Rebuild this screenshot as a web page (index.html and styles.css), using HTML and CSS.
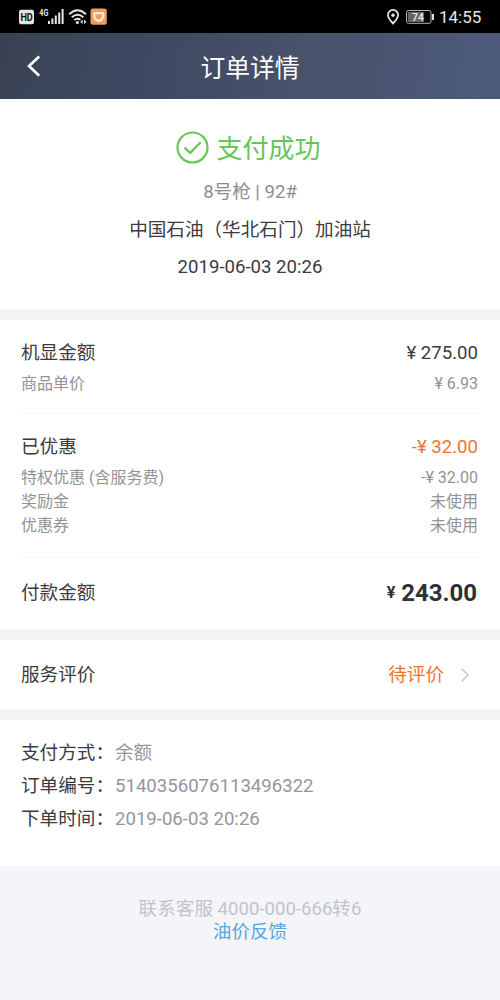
FILE: index.html
```html
<!DOCTYPE html>
<html lang="zh-CN">
<head>
<meta charset="utf-8">
<title>订单详情</title>
<link rel="stylesheet" href="styles.css">
</head>
<body>
<div class="status">
  <svg class="status-left" width="110" height="33" viewBox="0 0 110 33">
    <rect x="19" y="9.700" width="15" height="14.600" rx="2" fill="#e4e4e4"/>
    <text class="hd" x="20.400" y="21" textLength="12.400" lengthAdjust="spacingAndGlyphs">HD</text>
    <text class="net" x="39.300" y="15.600" textLength="9" lengthAdjust="spacingAndGlyphs">4G</text>
    <path d="M49 21v3M52.4 18.6V24M55.8 15.6V24M59.2 12.5V24M62.6 9V24" stroke="#e8e8e8" stroke-width="2"/>
    <g fill="none" stroke="#e4e4e4" stroke-width="1.900">
      <path d="M69.200 14.300q8.300-8 16.800 0"/>
      <path d="M71.800 17.300q5.800-5.200 11.600 0"/>
      <path d="M74.200 20q3.300-2.600 6.200-.2"/>
    </g>
    <circle cx="77.400" cy="22.500" r="1.600" fill="#e4e4e4"/>
    <path d="M82.600 19.500v4.400l-2.400-2.200zM84 19.500v4.400l2.400-2.200z" fill="#e4e4e4"/>
    <rect x="90.500" y="8.500" width="16.300" height="16.300" rx="2.500" fill="#f39a62"/>
    <path d="M93 13.600q0-1.600 1.600-1.600h8.200q1.600 0 1.600 1.600c0 4.600-1.800 8.400-5.700 8.400S93 18.200 93 13.600z" fill="#fbe9dc"/>
    <path d="M95.300 14.200h6.800c0 3-1 5.300-3.400 5.300s-3.400-2.300-3.400-5.300z" fill="#f39a62"/>
  </svg>
  <div class="status-right">
    <svg width="48" height="33" viewBox="0 0 48 33">
      <path d="M7 9.900a5.100 5.100 0 0 1 5.100 5.100c0 3.200-3.100 6-5.100 8.600c-2-2.600-5.100-5.400-5.100-8.600A5.100 5.100 0 0 1 7 9.900z" fill="none" stroke="#e8e8e8" stroke-width="1.700"/>
      <circle cx="7" cy="15.200" r="1.700" fill="#e8e8e8"/>
      <rect x="20.500" y="10.500" width="24.500" height="12.800" rx="2" fill="#000" stroke="#b5b5b5"/>
      <rect x="21.800" y="11.800" width="16" height="10.200" fill="#666"/>
      <rect x="46" y="14" width="2" height="6" fill="#ddd"/>
      <text class="level" x="26" y="21">74</text>
    </svg>
    <span class="clock">14:55</span>
  </div>
</div>
<header class="nav">
  <svg class="back" width="16" height="24" viewBox="0 0 16 24"><path d="M13.200 2.500L3 12l10.200 9.800" fill="none" stroke="#fff" stroke-width="2.600"/></svg>
  <h1 class="title">订单详情</h1>
</header>
<section class="card result">
  <div class="success">
    <svg width="33" height="33" viewBox="0 0 33 33" fill="none" stroke="#66c657"><circle cx="16.500" cy="16.500" r="15" stroke-width="2.200"/><path d="M8.500 16.700l5.700 5.200L24.700 11.300" stroke-width="2.300"/></svg>
    <span class="success-text">支付成功</span>
  </div>
  <div class="pump">8号枪 | 92#</div>
  <div class="station">中国石油（华北石门）加油站</div>
  <div class="date">2019-06-03 20:26</div>
</section>
<section class="card amounts">
  <div class="group">
    <div class="row main"><span>机显金额</span><span>¥ 275.00</span></div>
    <div class="row sub"><span>商品单价</span><span>¥ 6.93</span></div>
  </div>
  <div class="group discount">
    <div class="row main"><span>已优惠</span><span class="orange">-¥ 32.00</span></div>
    <div class="row sub"><span>特权优惠 (含服务费)</span><span>-¥ 32.00</span></div>
    <div class="row sub"><span>奖励金</span><span>未使用</span></div>
    <div class="row sub"><span>优惠券</span><span>未使用</span></div>
  </div>
  <div class="row total"><span>付款金额</span><span class="sum"><span class="yen">¥</span> 243.00</span></div>
</section>
<section class="card review">
  <span>服务评价</span>
  <span class="pending">待评价
    <svg width="10" height="16" viewBox="0 0 10 16"><path d="M1.500 1.500L8 8l-6.500 6.500" fill="none" stroke="#c8c8cc" stroke-width="1.500"/></svg>
  </span>
</section>
<section class="card info">
  <div class="line"><span>支付方式：</span><span class="value">余额</span></div>
  <div class="line"><span>订单编号：</span><span class="value">5140356076113496322</span></div>
  <div class="line"><span>下单时间：</span><span class="value">2019-06-03 20:26</span></div>
</section>
<footer class="footer">
  <div>联系客服 4000-000-666转6</div>
  <a class="feedback">油价反馈</a>
</footer>
</body>
</html>
```
FILE: styles.css
```css
* { box-sizing: border-box; }
body {
  margin: 0;
  width: 500px;
  height: 1000px;
  overflow: hidden;
  display: flex;
  flex-direction: column;
  background: #f4f4f5;
  color: #3b3b40;
  font: 18.6px/24px Roboto, "Noto Sans CJK SC", sans-serif;
}
svg { display: block; flex: none; }
.status {
  height: 33px;
  flex: none;
  display: flex;
  justify-content: space-between;
  background: #000;
}
.hd { font: bold 11.5px Roboto, sans-serif; fill: #111; }
.net { font: bold 8.5px Roboto, sans-serif; fill: #e8e8e8; }
.level { font: 500 10.5px Roboto, sans-serif; fill: #eee; }
.status-right { display: flex; padding-right: 19px; gap: 5px; }
.clock { width: 42px; font-size: 17px; line-height: 35px; color: #e8e8e8; white-space: nowrap; }
.nav {
  height: 66px;
  flex: none;
  display: grid;
  grid-template-columns: 50px 1fr 50px;
  align-items: center;
  background: linear-gradient(100deg, #394254 0%, #3d4860 25%, #465169 55%, #4d5a7a 100%);
}
.back { margin-left: 26px; }
.title {
  margin: 0;
  padding-top: 5px;
  color: #fff;
  text-align: center;
  font-size: 24.8px;
  font-weight: 400;
  line-height: 36px;
}
.card { flex: none; background: #fff; }
.result {
  height: 210px;
  padding-top: 30px;
  text-align: center;
}
.success {
  height: 36px;
  padding-right: 3px;
  display: flex;
  align-items: center;
  justify-content: center;
  gap: 7px;
  font-size: 26px;
  color: #66c657;
}
.success-text { padding-top: 3px; }
.pump { margin-top: 15px; color: #8d8d92; }
.station { margin-top: 14px; }
.date { margin-top: 13px; }
.amounts { height: 309px; margin-top: 11px; padding: 21px 22px 0 21px; }
.row { display: flex; justify-content: space-between; }
.main { margin-bottom: 7px; }
.sub { font-size: 16px; color: #929297; }
.group { height: 73px; border-bottom: 1px solid #f5f5f5; }
.discount { height: 144px; padding-top: 21px; }
.total { padding-top: 23px; }
.sum {
  padding-right: 1px;
  font-size: 24px;
  font-weight: 700;
  color: #2d3037;
}
.yen { font-size: 16px; vertical-align: 3px; line-height: 16px; }
.orange { color: #ee7330; }
.review {
  height: 69px;
  margin-top: 11px;
  padding: 1px 30px 0 21px;
  display: flex;
  align-items: center;
  justify-content: space-between;
}
.pending { display: flex; align-items: center; gap: 16px; color: #ee7330; }
.info { height: 146px; margin-top: 11px; padding: 21px 21px 0; }
.line { height: 33px; display: flex; gap: 1px; }
.value { color: #96969b; }
.footer {
  flex: 1;
  padding-top: 32px;
  text-align: center;
  line-height: 23px;
  background: #f4f5f8;
  color: #c2c3c9;
}
.feedback { color: #58a5d8; }
```
